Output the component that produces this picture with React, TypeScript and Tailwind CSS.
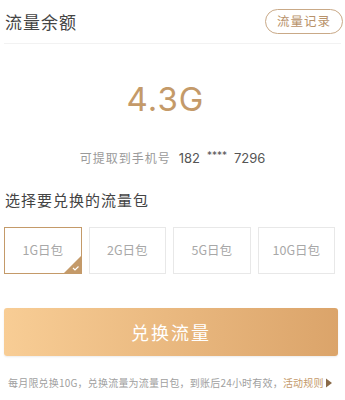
import { useState } from "react"

const packs = ["1G日包", "2G日包", "5G日包", "10G日包"]

export default function App() {
  const [picked, setPicked] = useState(0)

  return (
    <div
      className="w-[345px] h-[400px] bg-white px-[4px] text-[#333]"
      style={{ fontFamily: '"Noto Sans CJK SC", "Noto Sans", sans-serif' }}
    >
      {/* 头部 */}
      <div className="flex items-center justify-between h-[44px] border-b border-[#f2f2f2] pl-[1px]">
        <span className="text-[17px] text-[#444] tracking-[1px]">流量余额</span>
        <button className="h-[25px] w-[78px] mr-[-2px] rounded-full border-[1.5px] border-[#c9a987] text-[12.5px] text-[#b8926a] tracking-[1px] flex items-center justify-center">
          流量记录
        </button>
      </div>

      {/* 余额 */}
      <div className="flex flex-col items-center">
        <div
          className="mt-[35px] text-[33px] leading-[40px] text-[#c49a69] tracking-[1px] pr-[14px]"
          style={{ fontFamily: "Inter, sans-serif" }}
        >
          4.3G
        </div>
        <div className="mt-[31px] flex items-center text-[12px] leading-[16px]">
          <span className="text-[#9a9a9a] tracking-[1px]">可提取到手机号</span>
          <span className="ml-[8px] text-[#555] text-[13px]" style={{ fontFamily: "Inter, sans-serif" }}>
            182
          </span>
          <span className="ml-[7px] text-[#555] text-[10px] -mt-[7px]" style={{ fontFamily: "Inter, sans-serif" }}>
            ****
          </span>
          <span className="ml-[7px] text-[#555] text-[13px]" style={{ fontFamily: "Inter, sans-serif" }}>
            7296
          </span>
        </div>
      </div>

      {/* 选择 */}
      <div className="mt-[24px] pl-[1px] text-[15px] leading-[20px] text-[#444] tracking-[1px]">选择要兑换的流量包</div>
      <div className="mt-[17px] grid grid-cols-4 gap-[7px] pr-[6px]">
        {packs.map((p, i) => (
          <button
            key={p}
            onClick={() => setPicked(i)}
            className={
              "relative h-[47px] flex items-center justify-center text-[12.5px] text-[#a8a8a8] overflow-hidden border " +
              (picked === i ? "border-[#c49a69] border-[1.5px]" : "border-[#e8e8e8]")
            }
          >
            {p}
            {picked === i && (
              <svg className="absolute right-0 bottom-0" width="17" height="17" viewBox="0 0 17 17">
                <polygon points="17,0 17,17 0,17" fill="#c49a69" />
                <path d="M9 12 L11 14 L14.5 10.5" stroke="#fff" strokeWidth="1.2" fill="none" />
              </svg>
            )}
          </button>
        ))}
      </div>

      {/* 兑换按钮 */}
      <button className="mt-[34px] w-[334px] h-[48px] rounded-[3px] bg-gradient-to-r from-[#f8cd95] to-[#dba46a] text-white text-[18px] tracking-[2px] shadow-[0_1px_2px_rgba(0,0,0,0.08)]">
        兑换流量
      </button>

      {/* 说明 */}
      <div className="mt-[20px] pl-[4px] flex items-center text-[10px] leading-[14px] text-[#a0a0a0] tracking-[0.2px] whitespace-nowrap">
        <span>每月限兑换10G，兑换流量为流量日包，到账后24小时有效，</span>
        <span className="text-[#c49a69]">活动规则</span>
        <svg width="7" height="10" viewBox="0 0 7 10" className="ml-[1px] shrink-0">
          <polygon points="1,0.5 7,5 1,9.5" fill="#8a6a48" />
        </svg>
      </div>
    </div>
  )
}
